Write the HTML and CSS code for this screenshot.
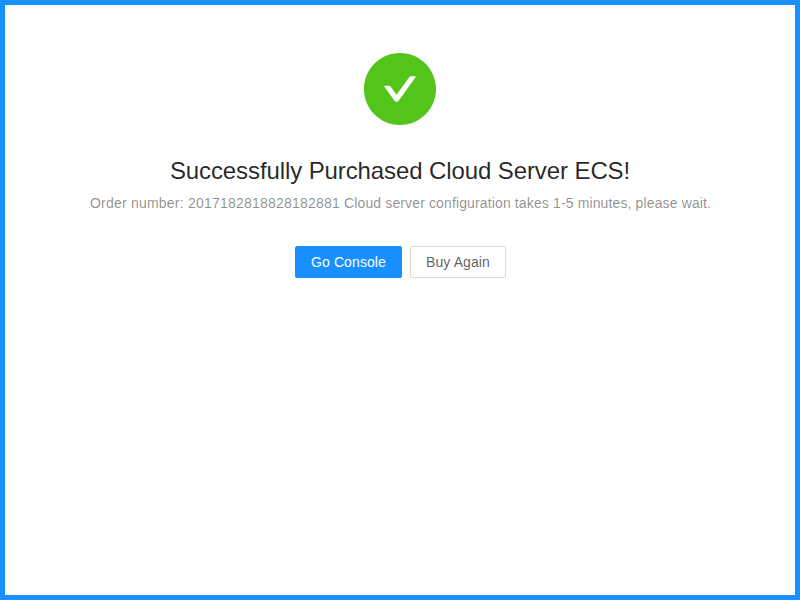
FILE: index.html
```html
<!DOCTYPE html>
<html lang="en">
<head>
<meta charset="utf-8">
<title>Purchase Result</title>
<link rel="stylesheet" href="styles.css">
</head>
<body>
<main class="result">
  <div class="result-icon">
    <svg viewBox="64 64 896 896" width="72" height="72" fill="currentColor" aria-hidden="true"><path d="M512 64C264.600 64 64 264.600 64 512s200.600 448 448 448 448-200.600 448-448S759.400 64 512 64zm193.500 301.700l-210.600 292a31.800 31.800 0 0 1-51.700 0L318.500 484.900c-3.800-5.300 0-12.700 6.500-12.700h46.900c10.200 0 19.900 4.900 25.900 13.300l71.200 98.800 157.200-218c6-8.300 15.600-13.300 25.900-13.300H699c6.500 0 10.300 7.400 6.500 12.700z"/></svg>
  </div>
  <div class="result-title">Successfully Purchased Cloud Server ECS!</div>
  <div class="result-subtitle"><span class="order">Order number: 2017182818828182881</span> Cloud server configuration takes 1-5 minutes, please wait.</div>
  <div class="result-extra">
    <button class="btn btn-primary" type="button">Go Console</button>
    <button class="btn" type="button">Buy Again</button>
  </div>
</main>
</body>
</html>
```
FILE: styles.css
```css
* {
  box-sizing: border-box;
}

body {
  margin: 0;
  min-height: 100vh;
  border: 5px solid #1890ff;
  background: #fff;
  color: rgba(0, 0, 0, 0.65);
  font: 14px/1.5715 "Liberation Sans", Arial, sans-serif;
}

.result {
  padding: 48px 32px;
  text-align: center;
}

.result-icon {
  margin-bottom: 24px;
  color: #52c41a;
}

.result-icon svg {
  display: block;
  margin: 0 auto;
}

.result-title {
  color: rgba(0, 0, 0, 0.85);
  font-size: 24px;
  line-height: 43px;
  letter-spacing: -0.1px;
}

.result-subtitle {
  padding-left: 1px;
  color: rgba(0, 0, 0, 0.45);
  font-size: 14px;
  line-height: 22px;
  letter-spacing: 0.13px;
}

.order {
  letter-spacing: 0.22px;
}

.result-extra {
  display: flex;
  justify-content: center;
  gap: 8px;
  margin-top: 32px;
  padding-left: 1px;
}

.btn {
  width: 96px;
  height: 32px;
  padding: 0;
  border: 1px solid #d9d9d9;
  border-radius: 2px;
  background: #fff;
  color: rgba(0, 0, 0, 0.65);
  font: inherit;
  letter-spacing: 0.1px;
  white-space: nowrap;
}

.btn-primary {
  width: 107px;
  border-color: #1890ff;
  background: #1890ff;
  color: #fff;
}
```
